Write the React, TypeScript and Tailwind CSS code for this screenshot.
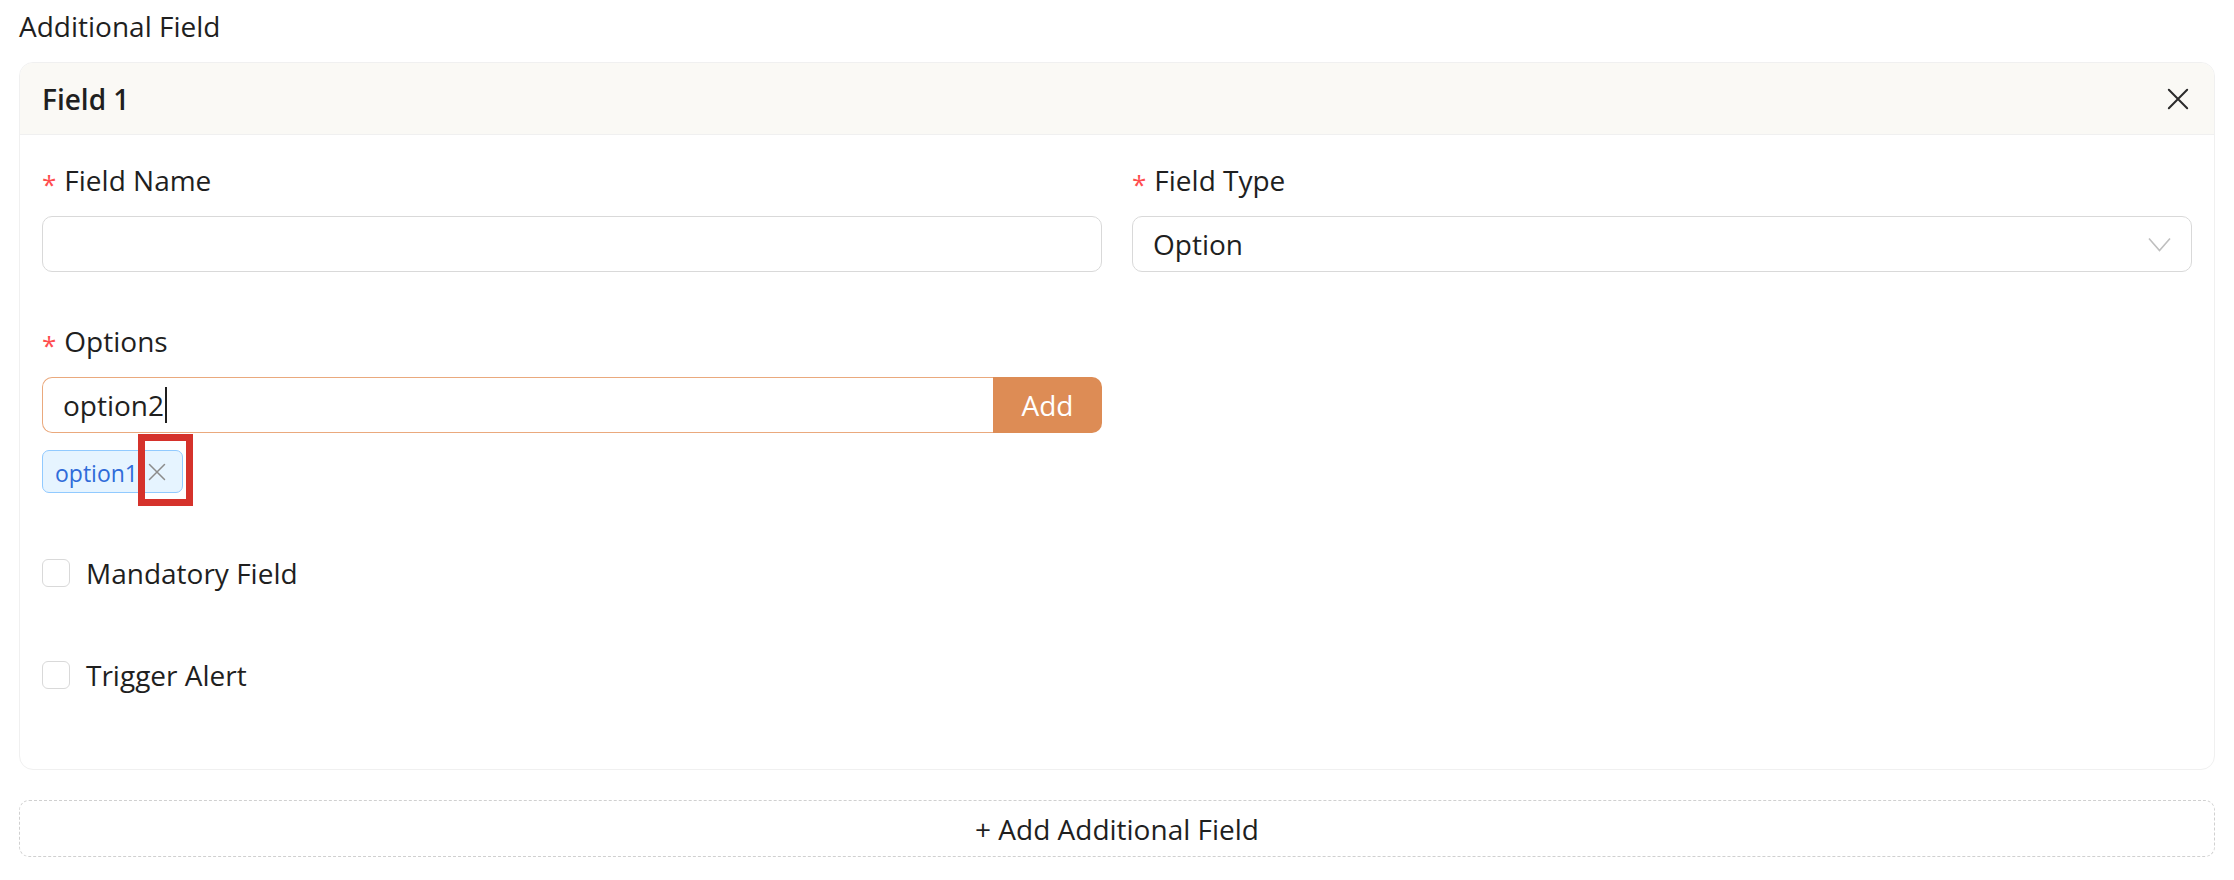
import type { ReactNode } from 'react';

const Label = ({ children }: { children: ReactNode }) => (
  <div className="h-[40px] mb-[16px] flex items-center leading-[40px]">
    <span className="text-[#ff4d4f] text-[26px] leading-none mr-[8px] translate-y-[4px]">*</span>
    {children}
  </div>
);

const CloseIcon = ({ size, color, width }: { size: number; color: string; width: number }) => (
  <svg width={size} height={size} viewBox="0 0 24 24" fill="none" stroke={color} strokeWidth={width} strokeLinecap="round">
    <path d="M2 2 L22 22 M22 2 L2 22" />
  </svg>
);

const Checkbox = ({ label }: { label: string }) => (
  <div className="h-[40px] flex items-center gap-[16px]">
    <span className="w-[28px] h-[28px] rounded-[6px] border border-[#d9d9d9] bg-white" />
    <span className="leading-[40px]">{label}</span>
  </div>
);

const App = () => {
  return (
    <div className="min-h-screen bg-white px-[19px] font-['Open_Sans',sans-serif] text-[28px] text-[#1f1f1f]">
      <div className="h-[52px] flex items-center leading-[40px]">Additional Field</div>

      <div className="mt-[10px] border border-[#f0f0f0] rounded-[14px] overflow-hidden">
        <div className="h-[72px] bg-[#faf9f5] border-b border-[#f0f0f0] flex items-center justify-between pl-[22px] pr-[25px]">
          <span className="font-semibold leading-[40px]">Field 1</span>
          <CloseIcon size={22} color="#2b2b2b" width={2.2} />
        </div>

        <div className="px-[22px] pt-[25px] pb-[74px]">
          <div className="grid grid-cols-2 gap-x-[30px] gap-y-[49px]">
            <div>
              <Label>Field Name</Label>
              <div className="h-[56px] rounded-[10px] border border-[#d9d9d9]" />
            </div>
            <div>
              <Label>Field Type</Label>
              <div className="h-[56px] rounded-[10px] border border-[#d9d9d9] flex items-center justify-between pl-[20px] pr-[20px]">
                <span className="leading-[40px]">Option</span>
                <svg width="23" height="15" viewBox="0 0 23 15" fill="none" stroke="#bfbfbf" strokeWidth="1.6">
                  <path d="M1 1.5 L11.5 13.5 L22 1.5" />
                </svg>
              </div>
            </div>

            <div>
              <Label>Options</Label>
              <div className="h-[56px] flex">
                <div className="flex-1 flex items-center pl-[20px] border border-r-0 border-[#eaa97d] rounded-l-[10px]">
                  <span className="leading-[40px]">option2</span>
                  <span className="w-[2px] h-[36px] bg-[#1f1f1f] ml-[1px]" />
                </div>
                <button className="w-[109px] bg-[#dd8c55] text-white rounded-r-[10px] leading-[40px]">Add</button>
              </div>
              <div className="mt-[17px] flex">
                <div className="relative h-[43px] flex items-center rounded-[7px] border border-[#91caff] bg-[#e6f4ff] pl-[12px] pr-[16px] text-[23px] text-[#2f6bd9]">
                  <span className="leading-[32px] translate-y-[1px]">option1</span>
                  <span className="ml-[10px] flex items-center">
                    <CloseIcon size={18} color="#8c8c8c" width={2} />
                  </span>
                  <div className="absolute left-[95px] top-[-17px] w-[55px] h-[72px] border-[7px] border-[#d5322b]" />
                </div>
              </div>
            </div>
            <div />
          </div>

          <div className="mt-[60px]">
            <Checkbox label="Mandatory Field" />
          </div>
          <div className="mt-[62px]">
            <Checkbox label="Trigger Alert" />
          </div>
        </div>
      </div>

      <button className="mt-[30px] h-[57px] w-full border border-dashed border-[#d0d0d0] rounded-[10px] flex items-center justify-center leading-[40px]">
        + Add Additional Field
      </button>
    </div>
  );
};

export default App;
